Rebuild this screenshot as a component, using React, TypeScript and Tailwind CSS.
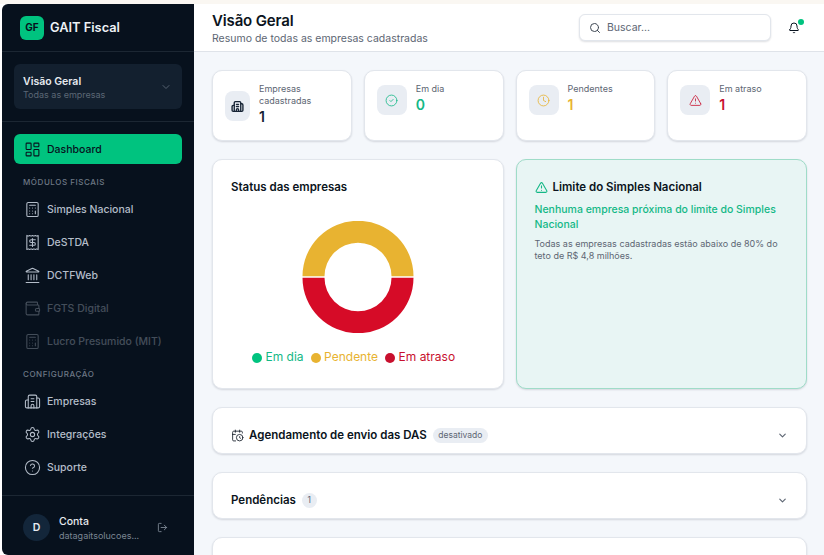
import React from 'react';
import {
  Bell,
  Building2,
  Calculator,
  CalendarClock,
  ChevronDown,
  CircleCheck,
  CircleHelp,
  Clock,
  Landmark,
  LayoutDashboard,
  LogOut,
  Receipt,
  Search,
  Settings,
  TriangleAlert,
  Wallet,
} from 'lucide-react';

const NavItem = ({ icon: Icon, label, disabled }: { icon: React.ElementType; label: string; disabled?: boolean }) => (
  <div className={`flex h-[33px] items-center gap-[6px] px-[10px] ${disabled ? 'opacity-35' : ''}`}>
    <Icon className="h-[17px] w-[17px] text-[#b4bdc9]" strokeWidth={1.5} />
    <span className="text-[10.5px] font-medium whitespace-nowrap text-[#b4bdc9]">{label}</span>
  </div>
);

const SectionLabel = ({ children }: { children: React.ReactNode }) => (
  <p className="px-[9px] text-[8px] leading-[12px] font-medium tracking-[0.07em] text-[#6d7885] uppercase">{children}</p>
);

const Sidebar = () => (
  <aside className="flex h-[551px] w-[192px] shrink-0 flex-col rounded-l-[6px] bg-[#07111d]">
    <div className="flex h-[48px] shrink-0 items-center gap-[6px] border-b border-[#1c2733] px-[18px]">
      <div className="flex h-[24px] w-[24px] items-center justify-center rounded-[6px] bg-[#00c37f] text-[10px] font-bold text-[#07111d]">GF</div>
      <span className="text-[12.8px] font-semibold text-[#eef1f5]">GAIT Fiscal</span>
    </div>
    <div className="h-[70px] shrink-0 border-b border-[#1c2733] px-[12px] pt-[12px]">
      <div className="flex h-[45px] items-center justify-between rounded-[6px] bg-[#13202f] pr-[10px] pl-[9px]">
        <div className="pt-[2px]">
          <p className="text-[10.5px] leading-[14px] font-semibold text-[#e7ebf0]">Visão Geral</p>
          <p className="text-[9px] leading-[12px] text-[#5b6775]">Todas as empresas</p>
        </div>
        <ChevronDown className="h-[12px] w-[12px] text-[#556170]" />
      </div>
    </div>
    <nav className="flex-1 px-[12px] pt-[12px]">
      <div className="flex h-[30px] items-center gap-[6px] rounded-[6px] bg-[#00c37f] px-[10px] text-[#07111d]">
        <LayoutDashboard className="h-[17px] w-[17px]" strokeWidth={1.5} />
        <span className="pt-[1px] text-[10.5px] font-medium">Dashboard</span>
      </div>
      <div className="pt-[12px] pb-[5px]">
        <SectionLabel>Módulos fiscais</SectionLabel>
      </div>
      <NavItem icon={Calculator} label="Simples Nacional" />
      <NavItem icon={Receipt} label="DeSTDA" />
      <NavItem icon={Landmark} label="DCTFWeb" />
      <NavItem icon={Wallet} label="FGTS Digital" disabled />
      <NavItem icon={Calculator} label="Lucro Presumido (MIT)" disabled />
      <div className="pt-[10px] pb-[5px]">
        <SectionLabel>Configuração</SectionLabel>
      </div>
      <NavItem icon={Building2} label="Empresas" />
      <NavItem icon={Settings} label="Integrações" />
      <NavItem icon={CircleHelp} label="Suporte" />
    </nav>
    <div className="flex h-[60px] shrink-0 items-center border-t border-[#1c2733] pt-[4px] pr-[26px] pl-[21px]">
      <div className="flex h-[27px] w-[27px] items-center justify-center rounded-full bg-[#13263a] text-[10.5px] font-semibold text-[#e7ebf0]">D</div>
      <div className="ml-[9px] flex-1 pt-[2px]">
        <p className="text-[10.5px] leading-[14px] font-medium text-[#e7ebf0]">Conta</p>
        <p className="text-[9px] leading-[14px] text-[#7b8693]">datagaitsolucoes...</p>
      </div>
      <LogOut className="h-[11px] w-[11px] text-[#7b8693]" />
    </div>
  </aside>
);

const StatCard = ({ icon: Icon, label, value, color, wide }: { icon: React.ElementType; label: string; value: string; color: string; wide?: boolean }) => (
  <div className="flex h-[71px] rounded-[10px] border border-[#e2e6ec] bg-white pt-[12px] pl-[12px] shadow-[0_1px_2px_rgba(15,23,42,0.14)]">
    <div className={`flex h-[30px] shrink-0 items-center justify-center rounded-[8px] bg-[#e9edf3] ${wide ? 'mt-[8px] w-[25px]' : 'mt-[2px] w-[30px]'}`}>
      <Icon className={`h-[13px] w-[13px] ${color}`} strokeWidth={wide ? 2.5 : 1.5} />
    </div>
    <div className="ml-[9px]">
      <p className="w-[60px] text-[9px] leading-[12px] text-[#5d6673]">{label}</p>
      <p className={`text-[14px] leading-[20px] font-semibold ${color}`}>{value}</p>
    </div>
  </div>
);

const Accordion = ({ children }: { children: React.ReactNode }) => (
  <div className="flex h-[47px] shrink-0 items-center justify-between rounded-[10px] border border-[#e2e6ec] bg-white pt-[10px] pr-[18px] pl-[18px] shadow-[0_1px_2px_rgba(15,23,42,0.14)]">
    <div className="flex items-center">{children}</div>
    <ChevronDown className="h-[11px] w-[11px] text-[#5d6673]" strokeWidth={2.5} />
  </div>
);

const Legend = ({ dot, text, label }: { dot: string; text: string; label: string }) => (
  <div className="flex items-center gap-[3.5px]">
    <span className={`mt-[1px] h-[10px] w-[10px] rounded-full ${dot}`} />
    <span className={`text-[12px] ${text}`}>{label}</span>
  </div>
);

export default function App() {
  return (
    <div className="h-[555px] w-[824px] overflow-hidden bg-white font-['Inter',sans-serif]">
      <div className="h-[4px] bg-[#faf7f2]" />
      <div className="flex pl-[2px]">
        <Sidebar />
        <div className="flex h-[551px] flex-1 flex-col overflow-hidden bg-[#f4f7fb]">
          <header className="flex h-[48px] shrink-0 items-center justify-between border-b border-[#dfe3e9] bg-white pr-[24px] pl-[18px]">
            <div className="pt-[1px]">
              <h1 className="text-[15px] leading-[20px] font-semibold tracking-[-0.01em] text-[#0b1420]">Visão Geral</h1>
              <p className="text-[10.5px] leading-[15px] text-[#5d6673]">Resumo de todas as empresas cadastradas</p>
            </div>
            <div className="flex items-center gap-[17px]">
              <div className="flex h-[27px] w-[192px] items-center gap-[6px] rounded-[6px] border border-[#e2e6ec] bg-white px-[9px] shadow-[0_1px_2px_rgba(15,23,42,0.14)]">
                <Search className="h-[12px] w-[12px] text-[#3f4854]" />
                <span className="text-[10.5px] text-[#5d6673]">Buscar...</span>
              </div>
              <div className="relative">
                <Bell className="h-[12px] w-[12px] text-[#0b1420]" />
                <span className="absolute -top-[3px] -right-[4px] h-[6px] w-[6px] rounded-full bg-[#00c37f]" />
              </div>
            </div>
          </header>
          <main className="flex flex-col gap-[18px] pt-[18px] pr-[17px] pl-[18px]">
            <div className="grid grid-cols-4 gap-[12px]">
              <StatCard icon={Building2} label="Empresas cadastradas" value="1" color="text-[#162334]" wide />
              <StatCard icon={CircleCheck} label="Em dia" value="0" color="text-[#14b886]" />
              <StatCard icon={Clock} label="Pendentes" value="1" color="text-[#e8b331]" />
              <StatCard icon={TriangleAlert} label="Em atraso" value="1" color="text-[#c8102e]" />
            </div>
            <div className="grid h-[230px] grid-cols-2 gap-[12px]">
              <div className="flex flex-col items-center rounded-[10px] border border-[#e2e6ec] bg-white px-[18px] pt-[19px] shadow-[0_1px_2px_rgba(15,23,42,0.14)]">
                <h2 className="w-full text-[11.5px] leading-[16px] font-semibold text-[#0b1420]">Status das empresas</h2>
                <svg viewBox="0 0 112 112" className="mt-[26px] h-[112px] w-[112px]">
                  <path d="M0.5 55.3A55.5 55.5 0 0 1 111.5 55.3L89.5 55.3A33.5 33.5 0 0 0 22.5 55.3Z" fill="#e8b331" />
                  <path d="M0.5 56.7A55.5 55.5 0 0 0 111.5 56.7L89.5 56.7A33.5 33.5 0 0 1 22.5 56.7Z" fill="#d60b27" />
                </svg>
                <div className="mt-[15px] flex items-center gap-[7px] self-start pl-[21px]">
                  <Legend dot="bg-[#00c37f]" text="text-[#14b886]" label="Em dia" />
                  <Legend dot="bg-[#e8b331]" text="text-[#e8b331]" label="Pendente" />
                  <Legend dot="bg-[#c8102e]" text="text-[#c8102e]" label="Em atraso" />
                </div>
              </div>
              <div className="rounded-[10px] border border-[#9fdcc8] bg-[#e8f5f4] px-[18px] pt-[19px] shadow-[0_1px_2px_rgba(15,23,42,0.14)]">
                <div className="flex items-center gap-[5px]">
                  <TriangleAlert className="h-[13px] w-[13px] text-[#14b886]" />
                  <h2 className="text-[11.5px] leading-[16px] font-semibold text-[#0b1420]">Limite do Simples Nacional</h2>
                </div>
                <p className="mt-[7px] text-[10.5px] leading-[15px] font-medium text-[#14b886]">Nenhuma empresa próxima do limite do Simples Nacional</p>
                <p className="mt-[6px] text-[9px] leading-[12px] text-[#5d6673]">Todas as empresas cadastradas estão abaixo de 80% do teto de R$ 4,8 milhões.</p>
              </div>
            </div>
            <Accordion>
              <CalendarClock className="mr-[5px] h-[13px] w-[13px] text-[#0b1420]" strokeWidth={1.5} />
              <span className="text-[11.5px] font-semibold text-[#0b1420]">Agendamento de envio das DAS</span>
              <span className="ml-[6px] rounded-full bg-[#e9edf3] px-[5.5px] py-[1px] text-[8.5px] leading-[13px] text-[#5d6673]">desativado</span>
            </Accordion>
            <Accordion>
              <span className="text-[11.5px] font-semibold text-[#0b1420]">Pendências</span>
              <span className="ml-[6px] flex h-[15px] w-[15px] items-center justify-center rounded-full bg-[#e9edf3] text-[8.5px] text-[#5d6673]">1</span>
            </Accordion>
            <Accordion>{null}</Accordion>
          </main>
        </div>
      </div>
    </div>
  );
}
